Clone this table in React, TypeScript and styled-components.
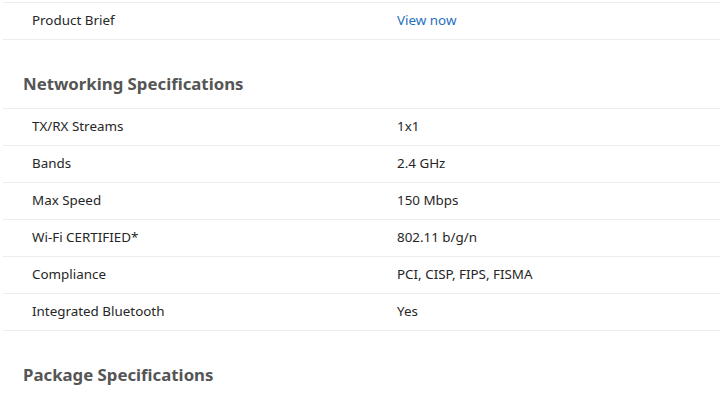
import React from 'react';
import styled, { createGlobalStyle } from 'styled-components';

type Spec = { label: string; value: string; link?: boolean };

const sections: { title?: string; rows: Spec[] }[] = [
    {
        rows: [{ label: 'Product Brief', value: 'View now', link: true }],
    },
    {
        title: 'Networking Specifications',
        rows: [
            { label: 'TX/RX Streams', value: '1x1' },
            { label: 'Bands', value: '2.4 GHz' },
            { label: 'Max Speed', value: '150 Mbps' },
            { label: 'Wi-Fi CERTIFIED*', value: '802.11 b/g/n' },
            { label: 'Compliance', value: 'PCI, CISP, FIPS, FISMA' },
            { label: 'Integrated Bluetooth', value: 'Yes' },
        ],
    },
    {
        title: 'Package Specifications',
        rows: [],
    },
];

const App = () => {
    return (
        <>
            <GlobalStyle />
            <Page>
                {sections.map((section, i) => (
                    <Section key={i}>
                        {section.title && <Heading>{section.title}</Heading>}
                        {section.rows.length > 0 && (
                            <Table>
                                {section.rows.map((row) => (
                                    <Row key={row.label}>
                                        <Label>{row.label}</Label>
                                        {row.link ? <Link href="#">{row.value}</Link> : <Value>{row.value}</Value>}
                                    </Row>
                                ))}
                            </Table>
                        )}
                    </Section>
                ))}
            </Page>
        </>
    );
};

const GlobalStyle = createGlobalStyle`
    html, body {
        margin: 0;
        padding: 0;
        background: #fff;
        font-family: "Noto Sans", "Open Sans", Arial, sans-serif;
        overflow: hidden;
    }
`;

const Page = styled.div`
    display: flex;
    flex-direction: column;
    padding-top: 2px;
    margin-left: 3px;
    width: 730px;
`;

const Section = styled.section`
    display: flex;
    flex-direction: column;
`;

const Heading = styled.h2`
    margin: 0;
    padding: 32px 0 12px 20px;
    font-size: 16.8px;
    line-height: 24px;
    font-weight: 700;
    color: #555555;
`;

const Table = styled.div`
    display: flex;
    flex-direction: column;
    border-top: 1px solid #ececec;
`;

const Row = styled.div`
    display: grid;
    grid-template-columns: 365px 1fr;
    align-items: center;
    height: 37px;
    box-sizing: border-box;
    padding: 0 0 2px 29px;
    border-bottom: 1px solid #ececec;
    font-size: 13.4px;
    line-height: 18px;
    color: #262626;
`;

const Label = styled.div``;

const Value = styled.div``;

const Link = styled.a`
    color: #1f6fbf;
    text-decoration: none;
`;

export default App;
